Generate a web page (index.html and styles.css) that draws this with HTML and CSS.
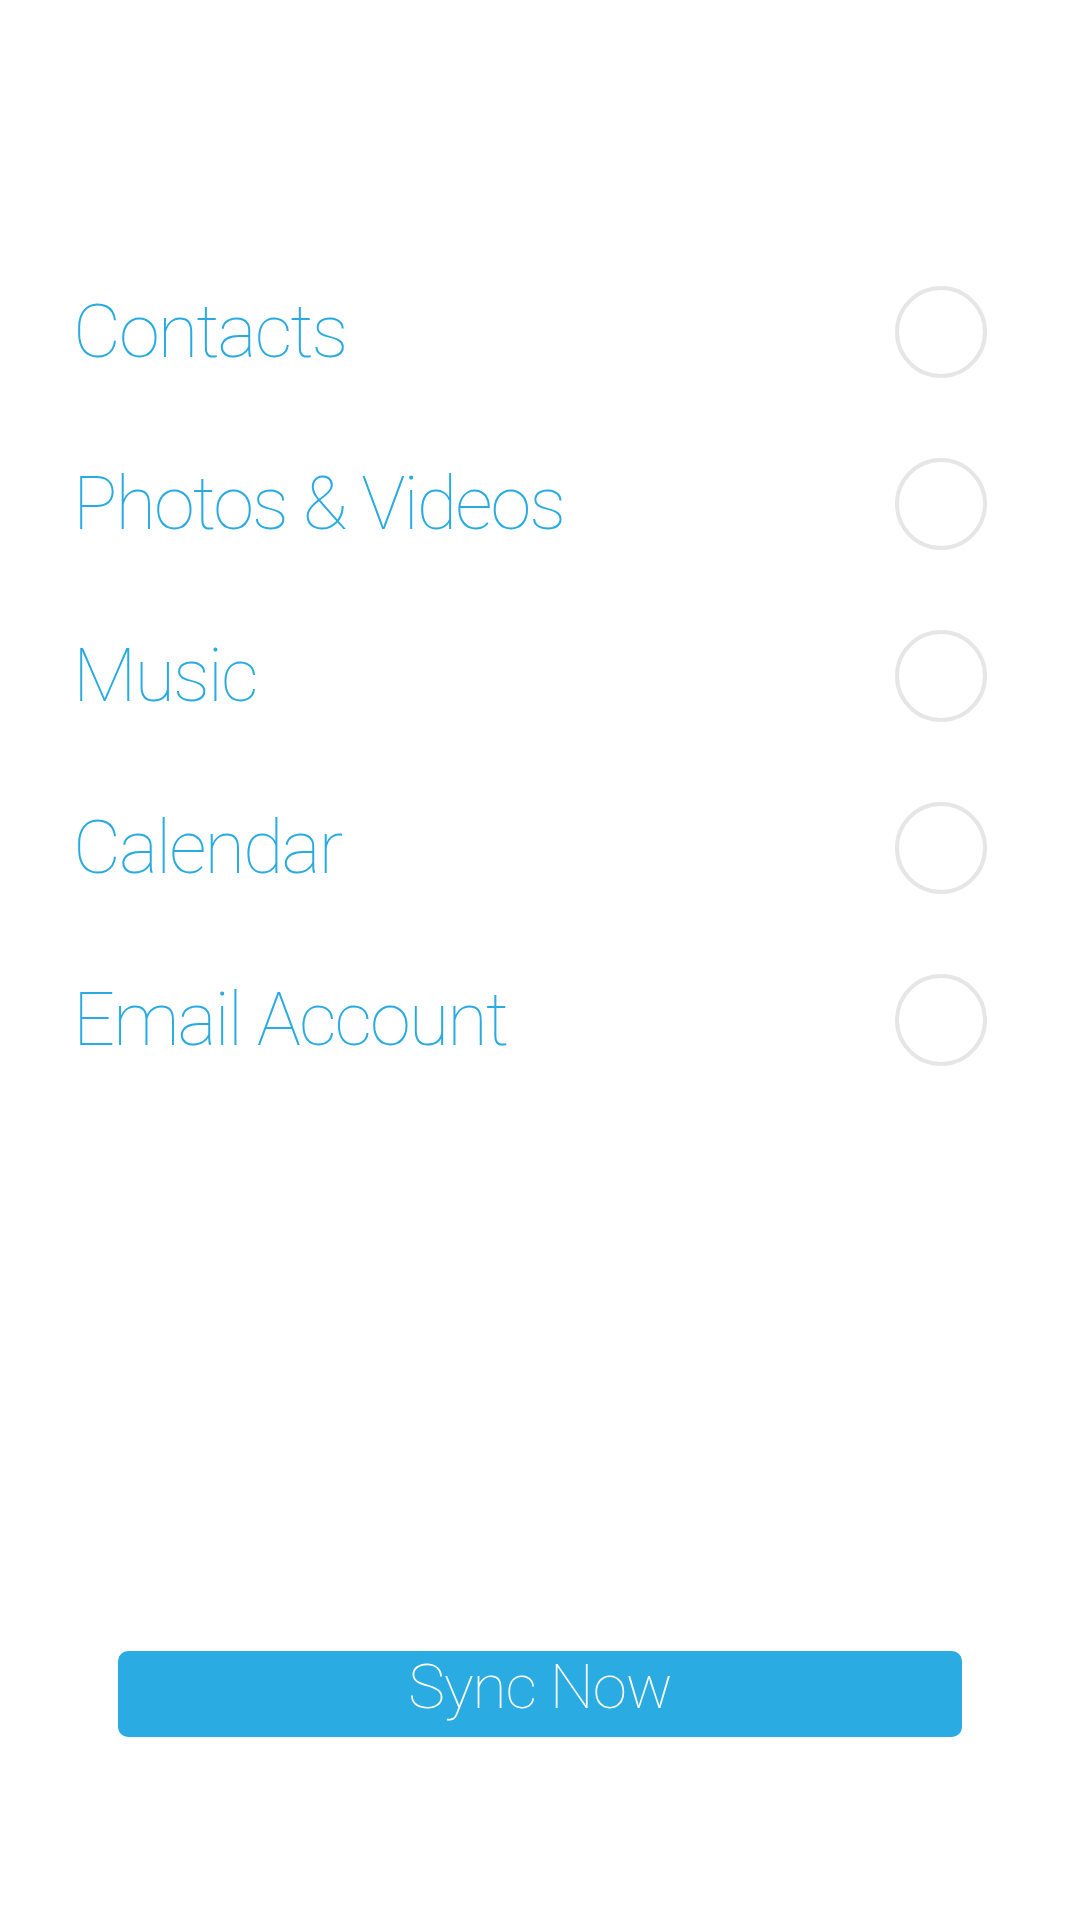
FILE: index.html
```html
<!DOCTYPE html>
<html>
<head>
<meta charset="utf-8">
<link rel="stylesheet" href="styles.css">
</head>
<body>
<div class="screen">
  <ul class="list">
    <li class="row"><span class="label">Contacts</span><span class="check"></span></li>
    <li class="row"><span class="label">Photos &amp; Videos</span><span class="check"></span></li>
    <li class="row"><span class="label">Music</span><span class="check"></span></li>
    <li class="row"><span class="label">Calendar</span><span class="check"></span></li>
    <li class="row"><span class="label">Email Account</span><span class="check"></span></li>
  </ul>
  <div class="actions">
    <button class="sync">Sync Now</button>
  </div>
</div>
</body>
</html>
```
FILE: styles.css
```css
html, body {
  margin: 0;
  padding: 0;
  background: #ffffff;
}
.screen {
  width: 1080px;
  height: 1920px;
  display: flex;
  flex-direction: column;
}
.list {
  list-style: none;
  margin: 0;
  padding: 246px 0 0 0;
}
.row {
  height: 172px;
  display: flex;
  align-items: center;
  justify-content: space-between;
  padding: 0 93px 0 73px;
}
.label {
  font-family: "Roboto", sans-serif;
  font-weight: 100;
  font-size: 74px;
  letter-spacing: -2px;
  color: #29abe2;
  line-height: 1;
}
.check {
  width: 84px;
  height: 84px;
  border: 4px solid #e6e6e6;
  border-radius: 50%;
}
.actions {
  padding: 545px 118px 0 118px;
}
.sync {
  display: block;
  width: 100%;
  height: 86px;
  border: none;
  border-radius: 10px;
  background: #2aabe2;
  color: #ffffff;
  font-family: "Roboto", sans-serif;
  font-weight: 100;
  font-size: 62px;
  letter-spacing: -1px;
  line-height: 1;
  padding: 0 0 14px 0;
}
```
